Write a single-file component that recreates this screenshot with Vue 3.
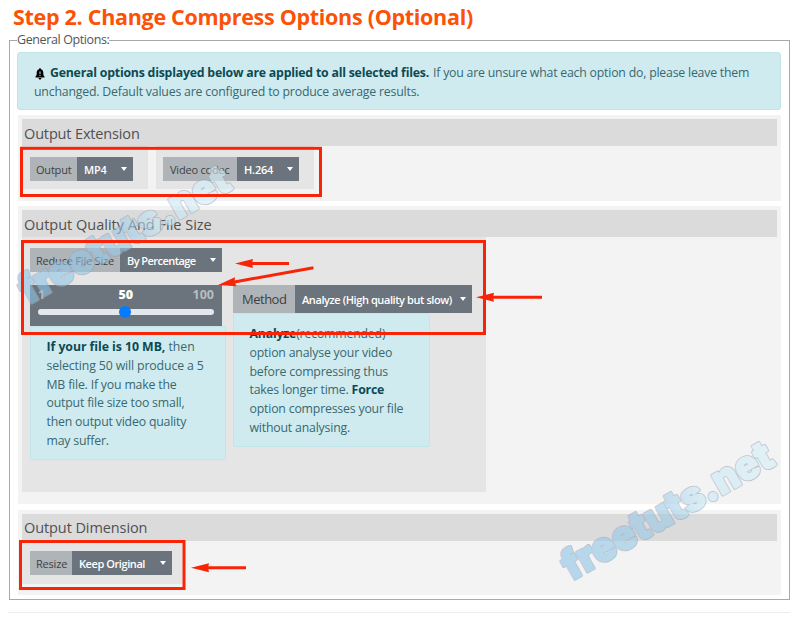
<script setup>
import { ref } from 'vue'

const percentage = ref(50)
const marks = ['translate(571.500 581) rotate(-29.6)', 'translate(28.500 305) rotate(-29.6)']
const arrows = [
  { x: 235, y: 263.5, angle: 0, length: 54 },
  { x: 218, y: 285, angle: -10.3, length: 97 },
  { x: 476, y: 297.2, angle: 0, length: 66 },
  { x: 191, y: 567.7, angle: 0, length: 55 },
]
</script>

<template>
  <main class="page">
    <h1 class="title">Step 2. Change Compress Options (Optional)</h1>
    <fieldset class="options">
      <legend>General Options:</legend>

      <div class="notice">
        <div class="line">
          <svg class="bell" viewBox="0 0 10 12" width="10" height="12">
            <path d="M5 .3c.7 0 1 .5 1 1C7.500 1.800 8.300 3 8.300 4.700c0 2.300.4 3 1.200 3.900v.9H.5v-.9c.8-.9 1.200-1.600 1.200-3.900C1.700 3 2.500 1.800 4 1.300c0-.5.3-1 1-1zM3.600 10h2.800c0 2-2.800 2-2.800 0z" />
            <path class="bang" d="M5 3.500v2.600M5 7v1" />
          </svg>
          <b>General options displayed below are applied to all selected files.</b>
          <span class="rest">If you are unsure what each option do, please leave them</span>
        </div>
        <div class="line">unchanged. Default values are configured to produce average results.</div>
      </div>

      <section class="section ext">
        <h2 class="h-ext">Output Extension</h2>
        <div class="row">
          <div class="cell cell-out">
            <div class="group"><label class="w47">Output</label><button class="w56">MP4<i></i></button></div>
          </div>
          <div class="cell cell-codec">
            <div class="group"><label class="w74">Video codec</label><button class="w62">H.264<i></i></button></div>
          </div>
        </div>
      </section>

      <section class="section quality">
        <h2>Output Quality And File Size</h2>
        <div class="panel">
          <div class="group"><label class="w90">Reduce File Size</label><button class="w102 t-by">By Percentage<i></i></button></div>
          <div class="columns">
            <div class="column">
              <div class="slider">
                <div class="scale"><span>1</span><b>{{ percentage }}</b><span>100</span></div>
                <div class="track"><span class="thumb" :style="{ left: percentage - 0.5 + '%' }"></span></div>
              </div>
              <div class="info">
                <div class="line a1"><b>If your file is 10 MB,</b> then</div>
                <div class="line a2">selecting 50 will produce a 5</div>
                <div class="line">MB file. If you make the</div>
                <div class="line">output file size too small,</div>
                <div class="line">then output video quality</div>
                <div class="line">may suffer.</div>
              </div>
            </div>
            <div class="column">
              <div class="group tall"><label class="w62 t-method">Method</label><button class="w177 t-analyze">Analyze (High quality but slow)<i></i></button></div>
              <div class="info info-method">
                <div class="line"><b>Analyze</b>(recommended)</div>
                <div class="line">option analyse your video</div>
                <div class="line">before compressing thus</div>
                <div class="line">takes longer time. <b>Force</b></div>
                <div class="line">option compresses your file</div>
                <div class="line">without analysing.</div>
              </div>
            </div>
          </div>
        </div>
      </section>

      <section class="section dimension">
        <h2 class="h-dim">Output Dimension</h2>
        <div class="cell cell-resize">
          <div class="group"><label class="w42">Resize</label><button class="w100 t-keep">Keep Original<i></i></button></div>
        </div>
      </section>
    </fieldset>
    <hr class="divider" />

    <svg class="overlay" viewBox="0 0 800 619" width="800" height="619">
      <defs>
        <linearGradient id="ink" gradientUnits="userSpaceOnUse" x1="0" x2="236" y1="0" y2="0">
          <stop offset="0" stop-color="#8cc4e8" />
          <stop offset="0.5" stop-color="#9bcbe6" />
          <stop offset="0.65" stop-color="#c8e7f4" />
          <stop offset="1" stop-color="#d5f0f8" />
        </linearGradient>
      </defs>
      <g v-for="m in marks" :key="m" class="mark" :transform="m">
        <text class="edge" x="0" y="0" textLength="236" lengthAdjust="spacingAndGlyphs">freetuts.net</text>
        <text class="fill" x="0" y="0" textLength="236" lengthAdjust="spacingAndGlyphs" aria-hidden="true">freetuts.net</text>
      </g>
      <g class="frames">
        <rect x="21.500" y="148.300" width="299" height="47.200" />
        <rect x="22.500" y="241.500" width="462" height="92" />
        <rect x="20.500" y="541.500" width="163.500" height="47" />
      </g>
      <g v-for="(a, i) in arrows" :key="i" :transform="`translate(${a.x} ${a.y}) rotate(${a.angle})`">
        <path class="head" d="M0 0 18-4.500 17 0 18 4.500Z" />
        <path class="shaft" :d="`M14 0H${a.length}`" />
      </g>
    </svg>
  </main>
</template>

<style>
body {
  background: #fff;
}
</style>

<style scoped>
* {
  box-sizing: border-box;
}
.page {
  position: relative;
  width: 800px;
  height: 619px;
  overflow: hidden;
  font-family: "Open Sans", "Noto Sans", sans-serif;
  color: #444;
}
.title {
  margin: 0;
  padding: 2px 0 0 13px;
  height: 34px;
  font-size: 21.500px;
  line-height: 30px;
  letter-spacing: -0.290px;
  font-weight: 700;
  color: #fb5207;
  white-space: nowrap;
}
.options {
  margin: 0 0 0 9px;
  padding: 5px 8px 0 7px;
  width: 781px;
  height: 566px;
  min-width: 0;
  border: 1px solid #a9a9a9;
}
legend {
  padding: 0;
  height: 13px;
  font-size: 12.500px;
  line-height: 12px;
  letter-spacing: -0.390px;
  color: #555;
  white-space: nowrap;
}
.notice {
  width: 764px;
  height: 58px;
  padding: 10px 0 0 16px;
  border: 1px solid #bfe4ea;
  border-radius: 3px;
  background: #d0ebef;
  color: #386870;
  font-size: 12.300px;
}
.line {
  height: 18.750px;
  line-height: 19px;
  letter-spacing: -0.190px;
  white-space: nowrap;
}
.a1 {
  letter-spacing: -0.050px;
}
.a2 {
  letter-spacing: -0.130px;
}
.line b {
  color: #0b4a54;
}
.notice b {
  letter-spacing: -0.210px;
}
.rest {
  margin-left: 4px;
  letter-spacing: -0.210px;
}
.bell {
  margin: 0 5px 0 1px;
  vertical-align: -3px;
}
.bang {
  fill: none;
  stroke: #cfeaef;
  stroke-width: 1;
}
.section {
  width: 763px;
  margin-left: 1px;
  padding: 4px;
  background: #f3f3f3;
}
h2 {
  margin: 0;
  height: 27px;
  padding-left: 2px;
  width: 755px;
  background: #dbdbdb;
  font-size: 14.500px;
  line-height: 29px;
  font-weight: 400;
  color: #505050;
  white-space: nowrap;
}
.h-ext {
  letter-spacing: -0.150px;
}
.h-dim {
  line-height: 28px;
  letter-spacing: -0.090px;
}
.ext {
  margin-top: 5px;
  height: 86px;
}
.quality {
  margin-top: 5px;
  height: 298px;
}
.dimension {
  margin-top: 6px;
  height: 85px;
}
.row {
  display: flex;
  gap: 8px;
}
.cell {
  height: 43px;
  padding: 11px 0 0 8px;
  background: #e5e5e5;
}
.cell-out {
  width: 126px;
}
.cell-codec {
  width: 158px;
  padding-left: 7px;
}
.cell-resize {
  width: 160px;
  padding-top: 10px;
}
.group {
  display: flex;
  height: 24px;
}
.group label,
.group button {
  display: flex;
  align-items: center;
  margin: 0;
  border: 0;
  font-family: inherit;
  font-size: 11px;
  letter-spacing: -0.2px;
  white-space: nowrap;
}
.group label {
  padding: 0 0 0 6px;
  background: #afb4b8;
  color: #3d4144;
}
.group .w74 {
  padding-left: 7px;
}
.group button {
  justify-content: space-between;
  padding: 0 6px 0 7px;
  background: #6b737c;
  color: #fff;
  font-weight: 600;
}
.group .t-by {
  letter-spacing: -0.550px;
}
.group .t-analyze {
  letter-spacing: -0.420px;
}
.group .t-keep {
  letter-spacing: -0.420px;
}
.group i {
  width: 0;
  height: 0;
  border: 3.500px solid transparent;
  border-top: 4px solid #fff;
  border-bottom: 0;
}
.tall {
  height: 28px;
}
.w42 { width: 42px; }
.w47 { width: 47px; }
.w56 { width: 56px; }
.w62 { width: 62px; }
.w74 { width: 74px; }
.w90 { width: 90px; }
.w100 { width: 100px; }
.w102 { width: 102px; }
.w177 { width: 177px; }
.group .t-method {
  padding-left: 9px;
  font-size: 13px;
  letter-spacing: -0.5px;
}
.panel {
  width: 464px;
  height: 255px;
  padding: 11px 0 0 8px;
  background: #e5e5e5;
}
.columns {
  display: flex;
  gap: 7px;
  margin-top: 13px;
}
.column {
  width: 196px;
}
.tall {
  width: 239px;
}
.slider {
  width: 192px;
  height: 41px;
  padding: 1px 8px 0;
  background: #6b737c;
}
.scale {
  display: flex;
  justify-content: space-between;
  height: 23px;
  font-size: 12.500px;
  line-height: 18px;
  font-weight: 700;
  color: #b9bdc1;
}
.scale b {
  margin-left: 14px;
  color: #fff;
}
.track {
  position: relative;
  height: 6px;
  border-radius: 3px;
  background: #e4e7ec;
}
.thumb {
  position: absolute;
  top: -3px;
  width: 12px;
  height: 12px;
  margin-left: -6px;
  border-radius: 50%;
  background: #067bfb;
}
.info {
  width: 196px;
  height: 134px;
  padding: 10px 0 0 15.500px;
  border: 1px solid #c0e6eb;
  border-radius: 2px;
  background: #d0ebef;
  color: #386870;
  font-size: 12.300px;
}
.info-method {
  width: 197px;
}
.divider {
  width: 782px;
  margin: 12px 0 0 8px;
  border: 0;
  border-top: 1px solid #ececec;
}
.overlay {
  position: absolute;
  left: 0;
  top: 0;
}
.mark {
  opacity: 0.6;
}
.mark text {
  font-family: Inter, "Open Sans", sans-serif;
  font-size: 41px;
  font-weight: 900;
  stroke-linejoin: round;
}
.edge {
  stroke: #9aa0b2;
  stroke-width: 3;
}
.fill {
  fill: url(#ink);
  stroke: url(#ink);
  stroke-width: 1.400;
}
.frames rect {
  fill: none;
  stroke: #f82408;
  stroke-width: 3;
}
.head {
  fill: #f82408;
}
.shaft {
  stroke: #f82408;
  stroke-width: 3;
}
</style>
